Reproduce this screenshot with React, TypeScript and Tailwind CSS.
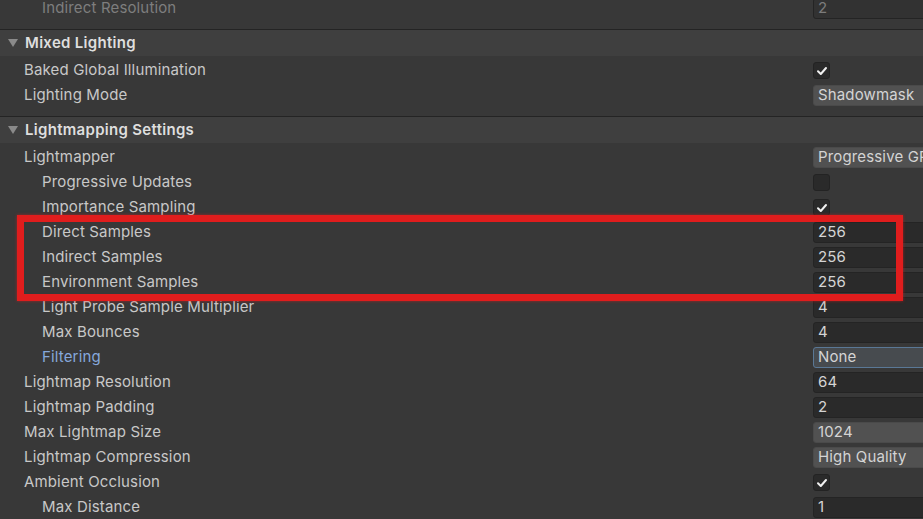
import React from "react";

const font = { fontFamily: "Inter, 'Noto Sans', sans-serif" };

function Check({ on }: { on: boolean }) {
  return (
    <div className="w-[17px] h-[17px] rounded-[3px] bg-[#2a2a2a] border border-[#232323] flex items-center justify-center">
      {on && (
        <svg width="12" height="12" viewBox="0 0 12 12">
          <path d="M2 6.3 L4.8 9 L10 3" stroke="#f0f0f0" strokeWidth="2" fill="none" strokeLinecap="round" strokeLinejoin="round" />
        </svg>
      )}
    </div>
  );
}

function NumField({ v, dim }: { v: string; dim?: boolean }) {
  return (
    <div
      className={`h-[21px] w-[140px] shrink-0 rounded-[3px] border border-[#242424] flex items-center pl-[4px] text-[15px] tracking-[0.15px] whitespace-nowrap overflow-hidden ${
        dim ? "bg-[#323232] text-[#7c7c7c]" : "bg-[#2a2a2a] text-[#d4d4d4]"
      }`}
    >
      {v}
    </div>
  );
}

function Drop({ v, focus }: { v: string; focus?: boolean }) {
  return (
    <div
      className={`h-[21px] w-[140px] shrink-0 rounded-[3px] flex items-center pl-[4px] text-[15px] tracking-[0.15px] text-[#d4d4d4] whitespace-nowrap overflow-hidden ${
        focus ? "bg-[#474b4f] border border-[#5a7896]" : "bg-[#515151] border border-[#4a4a4a]"
      }`}
    >
      {v}
    </div>
  );
}

function Row({
  label,
  indent,
  children,
  labelClass,
}: {
  label: string;
  indent?: boolean;
  children?: React.ReactNode;
  labelClass?: string;
}) {
  return (
    <div className="h-[25px] grid grid-cols-[813px_110px] items-center">
      <div
        className={`${indent ? "pl-[42px]" : "pl-[24px]"} text-[15px] tracking-[0.15px] whitespace-nowrap ${
          labelClass ?? "text-[#c8c8c8]"
        }`}
      >
        {label}
      </div>
      <div className="flex items-center overflow-hidden">{children}</div>
    </div>
  );
}

function Header({ title }: { title: string }) {
  return (
    <div className="mt-[8px] border-t border-[#242424] h-[27px] bg-[#3f3f3f] flex items-center">
      <svg width="12" height="10" viewBox="0 0 12 10" className="ml-[7px] mr-[6px]">
        <path d="M1 1 H11 L6 9 Z" fill="#8a8a8a" />
      </svg>
      <span className="text-[15px] font-semibold tracking-[0.3px] text-[#dedede]">{title}</span>
    </div>
  );
}

export default function App() {
  return (
    <div className="w-[923px] h-[519px] overflow-hidden bg-[#383838] relative" style={font}>
      <div className="mt-[-4px]">
        <Row label="Indirect Resolution" indent labelClass="text-[#7e7e7e]">
          <NumField v="2" dim />
        </Row>
      </div>
      <Header title="Mixed Lighting" />
      <div className="pt-[2px]">
        <Row label="Baked Global Illumination">
          <Check on />
        </Row>
        <Row label="Lighting Mode">
          <Drop v="Shadowmask" />
        </Row>
      </div>
      <Header title="Lightmapping Settings" />
      <div className="pt-[2px]">
        <Row label="Lightmapper">
          <Drop v="Progressive GPU (Preview)" />
        </Row>
        <Row label="Progressive Updates" indent>
          <Check on={false} />
        </Row>
        <Row label="Importance Sampling" indent>
          <Check on />
        </Row>
        <Row label="Direct Samples" indent>
          <NumField v="256" />
        </Row>
        <Row label="Indirect Samples" indent>
          <NumField v="256" />
        </Row>
        <Row label="Environment Samples" indent>
          <NumField v="256" />
        </Row>
        <Row label="Light Probe Sample Multiplier" indent>
          <NumField v="4" />
        </Row>
        <Row label="Max Bounces" indent>
          <NumField v="4" />
        </Row>
        <Row label="Filtering" indent labelClass="text-[#86a8dc]">
          <Drop v="None" focus />
        </Row>
        <Row label="Lightmap Resolution">
          <NumField v="64" />
        </Row>
        <Row label="Lightmap Padding">
          <NumField v="2" />
        </Row>
        <Row label="Max Lightmap Size">
          <Drop v="1024" />
        </Row>
        <Row label="Lightmap Compression">
          <Drop v="High Quality" />
        </Row>
        <Row label="Ambient Occlusion">
          <Check on />
        </Row>
        <Row label="Max Distance" indent>
          <NumField v="1" />
        </Row>
      </div>
      <div className="absolute left-[17px] top-[215px] w-[886px] h-[86px] border-[7px] border-[#e01d1d] shadow-[0_0_3px_rgba(224,29,29,0.6)]" />
    </div>
  );
}
